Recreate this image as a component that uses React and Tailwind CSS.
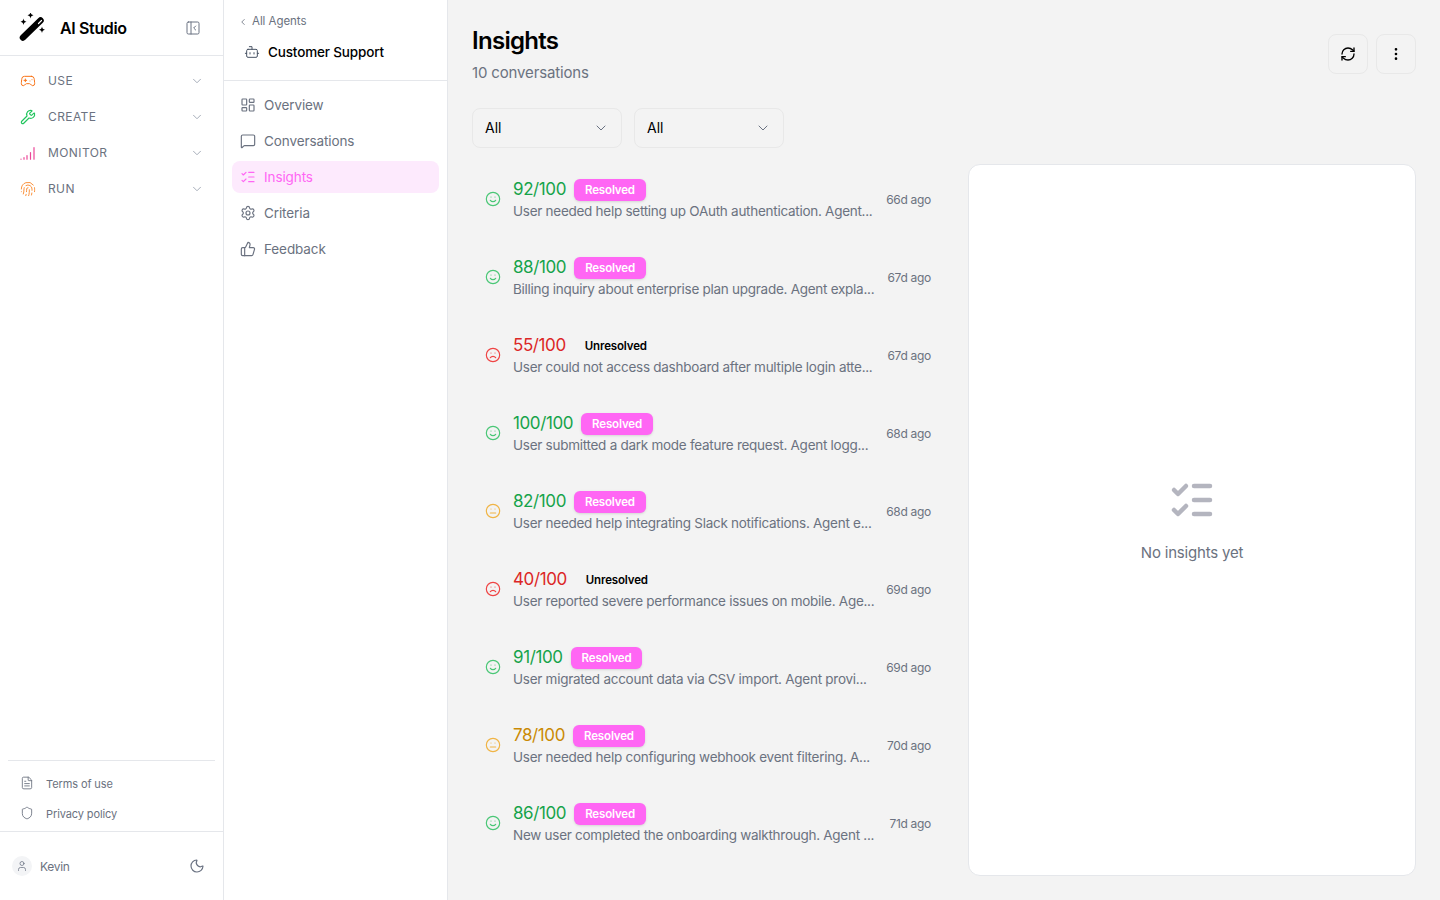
import {
  Gamepad2, Wrench, Fingerprint, PanelLeftClose, ChevronDown, ChevronLeft, Bot,
  LayoutDashboard, MessageSquare, ListChecks, Settings, ThumbsUp, FileText, Shield,
  User, Moon, RefreshCw, EllipsisVertical, Smile, Frown, Meh,
} from "lucide-react";

const font = { fontFamily: '"Inter", "Noto Sans", sans-serif' };

function Bars() {
  return (
    <svg width="16" height="16" viewBox="0 0 16 16" fill="none" stroke="#ec4899" strokeWidth="1.2" strokeLinecap="round">
      <path d="M1 14v0.2M4 12.5v1.7M7 10.5v3.7M10.5 7.5v6.7M14 2.5v11.7" />
    </svg>
  );
}

function Wand() {
  return (
    <svg width="30" height="30" viewBox="0 0 30 30" fill="#000">
      <path d="M5 24.500 22.500 7.500" stroke="#000" strokeWidth="6.500" strokeLinecap="round" />
      <path d="M20.500 10.500 23.500 7.500" stroke="#fff" strokeWidth="1.200" strokeLinecap="round" />
      <path d="M5.500 5.500c.4 2 1 2.700 3 3.200-2 .5-2.600 1.200-3 3.200-.4-2-1-2.700-3-3.200 2-.5 2.600-1.200 3-3.200Z" />
      <path d="M12.500-1c.4 2 1 2.700 3 3.200-2 .5-2.600 1.200-3 3.200-.4-2-1-2.700-3-3.200 2-.5 2.600-1.200 3-3.200Z" />
      <path d="M24 13.500c.4 2 1 2.700 3 3.200-2 .5-2.600 1.200-3 3.200-.4-2-1-2.700-3-3.200 2-.5 2.600-1.200 3-3.200Z" />
    </svg>
  );
}

const groups = [
  { label: "USE", icon: <Gamepad2 size={16} className="text-[#f97316]" strokeWidth={1.5} /> },
  { label: "CREATE", icon: <Wrench size={16} className="text-[#22c55e]" strokeWidth={1.75} /> },
  { label: "MONITOR", icon: <Bars /> },
  { label: "RUN", icon: <Fingerprint size={16} className="text-[#fb923c]" strokeWidth={1.5} /> },
];

const agentNav = [
  { label: "Overview", icon: LayoutDashboard },
  { label: "Conversations", icon: MessageSquare },
  { label: "Insights", icon: ListChecks, active: true },
  { label: "Criteria", icon: Settings },
  { label: "Feedback", icon: ThumbsUp },
];

const rows = [
  { score: "92/100", tone: "good", resolved: true, text: "User needed help setting up OAuth authentication. Agent...", time: "66d ago" },
  { score: "88/100", tone: "good", resolved: true, text: "Billing inquiry about enterprise plan upgrade. Agent expla...", time: "67d ago" },
  { score: "55/100", tone: "bad", resolved: false, text: "User could not access dashboard after multiple login atte...", time: "67d ago" },
  { score: "100/100", tone: "good", resolved: true, text: "User submitted a dark mode feature request. Agent logg...", time: "68d ago" },
  { score: "82/100", tone: "mid", scoreTone: "good", resolved: true, text: "User needed help integrating Slack notifications. Agent e...", time: "68d ago" },
  { score: "40/100", tone: "bad", resolved: false, text: "User reported severe performance issues on mobile. Age...", time: "69d ago" },
  { score: "91/100", tone: "good", resolved: true, text: "User migrated account data via CSV import. Agent provi...", time: "69d ago" },
  { score: "78/100", tone: "mid", resolved: true, text: "User needed help configuring webhook event filtering. A...", time: "70d ago" },
  { score: "86/100", tone: "good", resolved: true, text: "New user completed the onboarding walkthrough. Agent ...", time: "71d ago" },
];

const scoreColor = { good: "text-[#16a34a]", bad: "text-[#dc2626]", mid: "text-[#ca8a04]" };
const iconColor = { good: "text-[#4ac776]", bad: "text-[#ef4444]", mid: "text-[#f0b445]" };
const faces = { good: Smile, bad: Frown, mid: Meh };

function MainSidebar() {
  return (
    <aside className="flex h-full w-[224px] shrink-0 flex-col border-r border-[#e5e7eb] bg-white">
      <div className="flex h-[56px] shrink-0 items-center justify-between border-b border-[#e5e7eb] pl-[18px] pr-[22px]">
        <div className="flex items-center gap-[12px]">
          <Wand />
          <span className="text-[16px] font-semibold tracking-[-0.35px] text-black">AI Studio</span>
        </div>
        <PanelLeftClose size={16} className="text-gray-500" strokeWidth={1.5} />
      </div>
      <nav className="flex flex-col px-[8px] pb-[6px] pt-[7px]">
        {groups.map((g) => (
          <div key={g.label} className="flex h-[36px] items-center justify-between pl-[12px] pr-[11px]">
            <div className="flex items-center gap-[12px]">
              {g.icon}
              <span className="text-[12px] font-normal tracking-[0.4px] text-[#6b7280]">{g.label}</span>
            </div>
            <ChevronDown size={14} className="text-gray-400" strokeWidth={1.5} />
          </div>
        ))}
      </nav>
      <div className="mt-auto px-[8px]">
        <div className="flex flex-col border-t border-[#e5e7eb] pb-[3px] pt-[7px]">
          <div className="flex h-[30px] items-center gap-[12px] pl-[12px] text-[11px] tracking-[-0.1px] text-[#6b7280]">
            <FileText size={14} strokeWidth={1.5} />
            <span className="mt-[2px]">Terms of use</span>
          </div>
          <div className="flex h-[30px] items-center gap-[12px] pl-[12px] text-[11px] tracking-[-0.1px] text-[#6b7280]">
            <Shield size={14} strokeWidth={1.5} />
            <span className="mt-[2px]">Privacy policy</span>
          </div>
        </div>
      </div>
      <div className="flex h-[69px] shrink-0 items-center justify-between border-t border-[#e5e7eb] pl-[12px] pr-[18px]">
        <div className="flex items-center gap-[8px]">
          <div className="flex h-[20px] w-[20px] items-center justify-center rounded-full bg-[#f3f4f6]">
            <User size={12} className="text-gray-500" strokeWidth={1.5} />
          </div>
          <span className="mt-[2px] text-[12px] tracking-[-0.3px] text-[#6b7280]">Kevin</span>
        </div>
        <Moon size={16} className="text-gray-500" strokeWidth={1.75} />
      </div>
    </aside>
  );
}

function AgentSidebar() {
  return (
    <aside className="flex h-full w-[224px] shrink-0 flex-col border-r border-[#e5e7eb] bg-white">
      <div className="flex h-[81px] shrink-0 flex-col border-b border-[#e5e7eb] px-[14px] pt-[13px]">
        <div className="flex items-center gap-[4px] text-[11.500px] tracking-[-0.05px] text-[#6b7280]">
          <ChevronLeft size={10} />
          <span>All Agents</span>
        </div>
        <div className="mt-[12px] flex items-center gap-[8px] pl-[6px]">
          <Bot size={16} className="text-gray-600" strokeWidth={1.5} />
          <span className="text-[13.500px] font-medium tracking-[-0.15px] text-black">Customer Support</span>
        </div>
      </div>
      <nav className="flex flex-col px-[8px] pb-[6px] pt-[6px]">
        {agentNav.map((item) => {
          const Icon = item.icon;
          return (
            <div
              key={item.label}
              className={
                item.active
                  ? "my-[2px] flex h-[32px] items-center gap-[8px] rounded-lg bg-[#fdeafd] pl-[8px] text-[#ff66f4]"
                  : "my-[2px] flex h-[32px] items-center gap-[8px] rounded-lg pl-[8px] text-[#6b7280]"
              }
            >
              <Icon size={16} strokeWidth={1.75} />
              <span className="text-[13.500px] tracking-[-0.1px]">{item.label}</span>
            </div>
          );
        })}
      </nav>
    </aside>
  );
}

function Select() {
  return (
    <div className="flex h-[40px] w-[150px] items-center justify-between rounded-lg border border-[#e8e8e8] pl-[12px] pr-[12px] text-[14px] leading-[18px] text-black">
      <span>All</span>
      <ChevronDown size={16} className="text-gray-500" strokeWidth={1.5} />
    </div>
  );
}

function Row({ row }) {
  const Face = faces[row.tone];
  return (
    <div className="flex h-[78px] items-center gap-[12px] pl-[13px] pr-[13px]">
      <Face size={16} className={`shrink-0 ${iconColor[row.tone]}`} strokeWidth={1.75} />
      <div className="min-w-0 flex-1 pt-[3px]">
        <div className="flex h-[22px] items-center gap-[8px]">
          <span className={`text-[17px] tracking-[-0.4px] ${scoreColor[row.scoreTone || row.tone]}`}>{row.score}</span>
          {row.resolved ? (
            <span className="flex h-[22px] items-center rounded-md bg-[#ff66f4] px-[11px] pt-[1px] text-[11.500px] font-semibold tracking-[-0.15px] text-white shadow-sm">
              Resolved
            </span>
          ) : (
            <span className="flex h-[22px] items-center px-[11px] pt-[1px] text-[11.500px] font-semibold tracking-[-0.15px] text-black">Unresolved</span>
          )}
        </div>
        <p className="-mt-[1px] truncate text-[13.500px] leading-[22px] tracking-[-0.27px] text-[#6b7280]">{row.text}</p>
      </div>
      <span className="-ml-[3px] mt-[2px] shrink-0 text-[12px] tracking-[-0.3px] text-[#6b7280]">{row.time}</span>
    </div>
  );
}

export default function App() {
  return (
    <div className="flex h-[900px] w-full overflow-hidden bg-[#f3f3f3]" style={font}>
      <MainSidebar />
      <AgentSidebar />
      <main className="flex min-w-0 flex-1 flex-col px-[24px]">
        <div className="flex items-start justify-between pt-[24px]">
          <div>
            <h1 className="pt-[1px] text-[24px] font-semibold leading-[32px] tracking-[-0.7px] text-black">Insights</h1>
            <p className="mt-[4px] text-[15px] leading-[24px] tracking-[-0.15px] text-[#6b7280]">10 conversations</p>
          </div>
          <div className="mt-[10px] flex gap-[8px]">
            <button className="flex h-[40px] w-[40px] items-center justify-center rounded-lg border border-[#e8e8e8] text-black">
              <RefreshCw size={16} strokeWidth={2} />
            </button>
            <button className="flex h-[40px] w-[40px] items-center justify-center rounded-lg border border-[#e8e8e8] text-black">
              <EllipsisVertical size={16} />
            </button>
          </div>
        </div>
        <div className="mt-[23px] flex gap-[12px]">
          <Select />
          <Select />
        </div>
        <div className="mt-[16px] flex min-h-0 flex-1 gap-[24px] pb-[24px]">
          <div className="-mt-[4px] w-[472px] shrink-0">
            <div className="flex flex-col">
              {rows.map((row) => (
                <Row key={row.score} row={row} />
              ))}
            </div>
          </div>
          <div className="flex flex-1 flex-col items-center justify-center rounded-xl border border-[#e5e7eb] bg-white">
            <ListChecks size={48} className="text-[#b4b5bf]" strokeWidth={2.25} />
            <p className="mt-[18px] text-[15px] tracking-[-0.2px] text-[#6b7280]">No insights yet</p>
          </div>
        </div>
      </main>
    </div>
  );
}
